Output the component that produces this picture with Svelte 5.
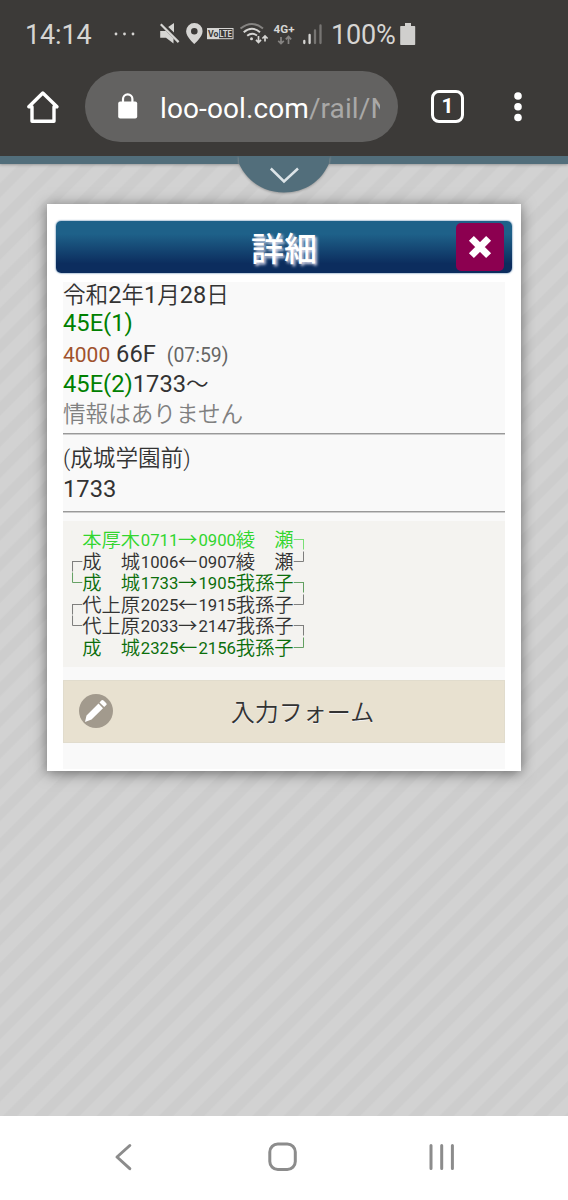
<script>
  const schedule = [
    { left: '', from: '本厚木', dep: '0711', arrow: '→', arr: '0900', to: '綾　瀬', right: '┐', tone: 'lime' },
    { left: '┌', from: '成　城', dep: '1006', arrow: '←', arr: '0907', to: '綾　瀬', right: '┘', tone: 'ink' },
    { left: '└', from: '成　城', dep: '1733', arrow: '→', arr: '1905', to: '我孫子', right: '┐', tone: 'forest' },
    { left: '┌', from: '代上原', dep: '2025', arrow: '←', arr: '1915', to: '我孫子', right: '┘', tone: 'ink' },
    { left: '└', from: '代上原', dep: '2033', arrow: '→', arr: '2147', to: '我孫子', right: '┐', tone: 'ink' },
    { left: '', from: '成　城', dep: '2325', arrow: '←', arr: '2156', to: '我孫子', right: '┘', tone: 'forest' }
  ];
</script>

<div class="phone">
  <div class="status">
    <span class="clock">14:14</span>
    <svg class="dots" width="22" height="4" viewBox="0 0 22 4" fill="#d6d5d3"><circle cx="2" cy="2" r="1.4" /><circle cx="10.5" cy="2" r="1.4" /><circle cx="19" cy="2" r="1.4" /></svg>
    <svg class="glyphs" width="170" height="28" viewBox="156 20 170 28">
      <g fill="#d6d5d3">
        <path d="M160.200 31H166L173.500 38.500V43.500L166 37.800H160.200Z M168.200 27L174 23V32.500Z" />
        <path d="M160.800 24.300L178.600 42.100" stroke="#d6d5d3" stroke-width="2.200" />
        <path d="M194.300 23a8.200 8.200 0 0 0-8.200 8.200C186.100 37 194.300 44 194.300 44s8.300-7 8.300-12.800A8.200 8.200 0 0 0 194.300 23Zm0 5a3.300 3.300 0 1 1 0 6.600a3.300 3.300 0 0 1 0-6.600Z" />
        <rect x="207" y="28" width="12" height="11" />
      </g>
      <rect x="207.500" y="28.500" width="25.500" height="10.200" fill="none" stroke="#d6d5d3" />
      <text x="208" y="37" class="volte" fill="#3c3a38" textLength="10.500" lengthAdjust="spacingAndGlyphs">Vo</text>
      <text x="219.300" y="37" class="volte" fill="#d6d5d3" textLength="12.500" lengthAdjust="spacingAndGlyphs">LTE</text>
      <g fill="none" stroke-width="2" stroke="#d6d5d3">
        <path d="M240.500 28.500Q252 19.500 263 28.500" stroke="#858381" />
        <path d="M243.700 32.200Q252 25.300 260 32.200" />
        <path d="M247.200 35.800Q252 32 257 35.500" />
        <path d="M258.500 36V42.500M256 39.800L258.500 42.500L261 39.800M265 41.500V36M262.400 38.500L265 36L267.600 38.500" stroke-width="1.700" />
        <path d="M281 37V43.500M278.200 40.800L281 43.500L283.800 40.800M288.500 44V37M285.800 39.300L288.500 36.500L291.200 39.300" stroke-width="1.700" stroke="#858381" />
      </g>
      <circle cx="251.500" cy="38.800" r="1.500" fill="#d6d5d3" />
      <text x="273.500" y="32.500" class="net" fill="#d6d5d3" textLength="21" lengthAdjust="spacingAndGlyphs">4G+</text>
      <g stroke-width="2.300" stroke-linecap="round">
        <path d="M304.300 41V43M309.600 35V43" stroke="#d6d5d3" />
        <path d="M315 30.500V43M320.500 25.500V43" stroke="#777573" />
      </g>
    </svg>
    <span class="percent">100%</span>
    <svg class="battery" width="16" height="23" viewBox="0 0 16 23" fill="#d0cfcd"><path d="M5 0h6v3h3.500a.7.700 0 0 1 .7.700v17.600a.7.700 0 0 1-.7.700H.900a.7.700 0 0 1-.7-.7V3.700A.7.700 0 0 1 .900 3H5z" /></svg>
  </div>

  <div class="toolbar">
    <svg class="home" width="34" height="34" viewBox="0 0 34 34" fill="none" stroke="#fff" stroke-width="3.400" stroke-linejoin="round" stroke-linecap="round"><path d="M2.800 16.700L16.800 3L31 16.700H28V31.200H6V16.700Z" /></svg>
    <div class="address">
      <svg width="20" height="26" viewBox="0 0 20 26"><rect x=".2" y="8.500" width="19" height="17" rx="2" fill="#fff" /><path d="M5 9V6a4.700 4.700 0 0 1 9.400 0V9" fill="none" stroke="#fff" stroke-width="2.200" /></svg>
      <span class="url">loo-ool.com<i>/rail/N</i></span>
    </div>
    <span class="tabs">1</span>
    <svg class="more" width="8" height="30" viewBox="0 0 8 30" fill="#fff"><circle cx="4" cy="4" r="3.800" /><circle cx="4" cy="14.700" r="3.800" /><circle cx="4" cy="25.500" r="3.800" /></svg>
  </div>

  <main>
    <div class="strip"></div>
    <svg class="pull" width="100" height="38" viewBox="0 0 100 38"><path d="M4.500 0L5.200 8C13 25 29 36.500 50 36.500S87 25 94.800 8L96 0Z" fill="#526e7b" /><path d="M36.800 12.500L50 25.500L64 12.500" fill="none" stroke="#dce4e8" stroke-width="2.500" /></svg>

    <section class="card">
      <header>
        <h1>詳細</h1>
        <button class="close" aria-label="close"><svg width="24" height="24" viewBox="0 0 24 24"><path d="M3.400 3.400L20.600 20.600M20.600 3.400L3.400 20.600" stroke="#fff" stroke-width="7" /></svg></button>
      </header>
      <div class="body">
        <p class="date">令和<b>2</b>年<b>1</b>月<b>28</b>日</p>
        <p class="r1"><b class="green">45E(1)</b></p>
        <p class="r2"><b class="brown">4000</b><b>{' 66F'}</b><small>(07:59)</small></p>
        <p class="r3"><b class="green">45E(2)</b><b>1733</b>～</p>
        <p class="none">情報はありません</p>
        <hr />
        <p class="station">(成城学園前)</p>
        <p class="time"><b>1733</b></p>
        <hr />
        <div class="schedule">
          {#each schedule as row}
            <div class="row {row.tone}">
              <i class="l">{row.left}</i><span>{row.from}</span><b>{row.dep}</b><em>{row.arrow}</em><b>{row.arr}</b><span>{row.to}</span><i>{row.right}</i>
            </div>
          {/each}
        </div>
        <button class="form">
          <span class="badge"><svg width="24" height="24" viewBox="0 0 24 24" fill="#fff"><path d="M1 23L2.500 16.500L14.500 4.500L19 9.200L7.500 20.500Z M15.500 3.500L17.600 1.300Q18.500.500 19.500 1.400L22.300 4.200Q23.200 5.200 22.300 6L20.200 8.100Z" /></svg></span>
          <span class="label">入力フォーム</span>
        </button>
      </div>
    </section>
  </main>

  <nav>
    <svg width="568" height="84" viewBox="0 1116 568 84" fill="none" stroke="#8c8c8c" stroke-width="3" stroke-linecap="round" stroke-linejoin="round"><path d="M129.800 1145.500L117 1157L129.800 1168.700" /><rect x="269.800" y="1144" width="25.500" height="25.500" rx="8" /><path d="M431 1145.500V1168.500M441.700 1145.500V1168.500M452.400 1145.500V1168.500" /></svg>
  </nav>
</div>

<style>
  :global(body) { margin: 0; background: #fff; }
  .phone { width: 568px; height: 1200px; display: flex; flex-direction: column; overflow: hidden; font-family: Roboto, "Noto Sans CJK JP", sans-serif; }
  .status { height: 70px; background: #3c3a38; display: flex; align-items: center; box-sizing: border-box; padding-left: 25px; color: #d6d5d3; flex: none; }
  .clock { width: 89px; margin-top: 0; font-size: 27px; letter-spacing: -.15px; }
  .dots { margin-top: -3px; }
  .glyphs { margin: -2px 0 0 20px; flex: none; }
  .volte { font: 700 9px Roboto, sans-serif; }
  .net { font: 700 11.500px Roboto, sans-serif; }
  .percent { width: 69px; margin: 0 0 0 5px; font-size: 27px; letter-spacing: -.2px; }
  .battery { margin-top: -2px; }
  .toolbar { height: 86px; background: #3c3a38; display: flex; align-items: flex-start; flex: none; }
  .home { margin: 20px 0 0 26px; }
  .address { margin: 1px 0 0 25px; width: 313px; height: 71px; border-radius: 36px; background: #636261; box-sizing: border-box; padding: 0 18px 0 33px; display: flex; align-items: center; }
  .address svg { flex: none; margin-top: -1px; }
  .url { margin: 3px 0 0 22px; width: 221px; overflow: hidden; white-space: nowrap; color: #fff; font-size: 28px; letter-spacing: .1px; }
  .url i { font-style: normal; color: #a9a8a7; }
  .tabs { box-sizing: border-box; width: 33px; height: 33px; margin: 20px 0 0 33px; border: 3px solid #fff; border-radius: 8px; color: #fff; font: 700 21px/27px Roboto, sans-serif; text-align: center; }
  .more { margin: 22px 0 0 50px; }
  main { position: relative; height: 960px; flex: none; overflow: hidden; background: repeating-linear-gradient(135deg, #cdcdcd 0 6.500px, #d2d2d2 8.200px 18.500px, #cdcdcd 20.200px 22.050px); }
  .strip { height: 8px; background: #526e7b; box-shadow: 0 1px 3px #999; }
  .pull { position: absolute; left: 234px; top: 0; filter: drop-shadow(0 1px 1px #999); }
  .card { width: 474px; height: 567px; box-sizing: border-box; margin: 40px 0 0 47px; padding: 17px 9px 0; background: #fff; box-shadow: 0 2px 13px rgba(0,0,0,.5); }
  header { height: 52px; border-radius: 5px; background: linear-gradient(#1e6189 0 25%, #0c2d5e 82%); box-shadow: 0 0 2px #17528a; display: flex; align-items: center; position: relative; }
  h1 { flex: 1; margin: -1px 0 0; text-align: center; color: #fff; font: 500 33px/48px "Noto Sans CJK JP", sans-serif; text-shadow: 2px 2px 3px #dde; }
  .close { position: absolute; right: 8px; top: 2px; width: 48px; height: 48px; border: 0; border-radius: 5px; background: #8c0050; padding: 0; display: grid; place-items: center; }
  .body { box-sizing: border-box; height: 487px; margin: 9px 7px 0; background: #f9f9f9; color: #333; font-size: 22.600px; overflow: hidden; }
  p { margin: 0; height: 30px; line-height: 30px; white-space: pre; font-family: Roboto, "Noto Sans CJK JP", sans-serif; font-weight: 350; }
  b, small { font-weight: 400; font-family: Roboto, sans-serif; font-size: 23.700px; }
  small { font-size: 19.400px; color: #666; margin-left: 11px; }
  .date { height: 27px; line-height: 27px; }
  .date b { font-size: 23.500px; }
  .r1 { height: 30px; line-height: 28px; }
  .r2 { height: 29px; line-height: 31px; }
  .r3 { line-height: 32px; }
  .none { color: #808080; height: 35px; line-height: 33px; }
  .green { color: #008000; }
  .brown { color: #a0522d; font-size: 21px; }
  hr { margin: 0; border: 0; height: 2px; background: linear-gradient(#999 50%, #ccc 50%); }
  .station { height: 44px; line-height: 47px; }
  .time { height: 32px; line-height: 20px; }
  .schedule { margin-top: 8px; box-sizing: border-box; height: 146px; padding-top: 8px; background: #f4f3f0; }
  .row { display: grid; grid-template-columns: 19.300px 58.500px 37.300px 20.300px 37.300px 58px 20px; height: 21.500px; line-height: 21.500px; font-size: 19.300px; font-family: "Noto Sans CJK JP", sans-serif; font-weight: 350; white-space: pre; }
  .row b { font-size: 16.700px; line-height: 24px; }
  .row i { font-style: normal; font-weight: 100; opacity: .8; }
  .row em { font-style: normal; }
  .lime { color: #32d62e; }
  .forest { color: #0b6e0b; }
  .ink { color: #333; }
  .form { margin-top: 13px; width: 442px; height: 63px; padding: 0 16px 2px 15px; border: 1px solid #e1dccd; background: #e8e1d0; display: flex; align-items: center; color: #333; }
  .badge { flex: none; width: 34px; height: 34px; border-radius: 50%; background: #a29a8d; display: grid; place-items: center; }
  .label { flex: 1; padding-left: 4px; text-align: center; font: 350 24px/34px "Noto Sans CJK JP", sans-serif; text-shadow: 0 1px 0 #f3f3f3; }
  nav { height: 84px; background: #fff; flex: none; }
</style>
